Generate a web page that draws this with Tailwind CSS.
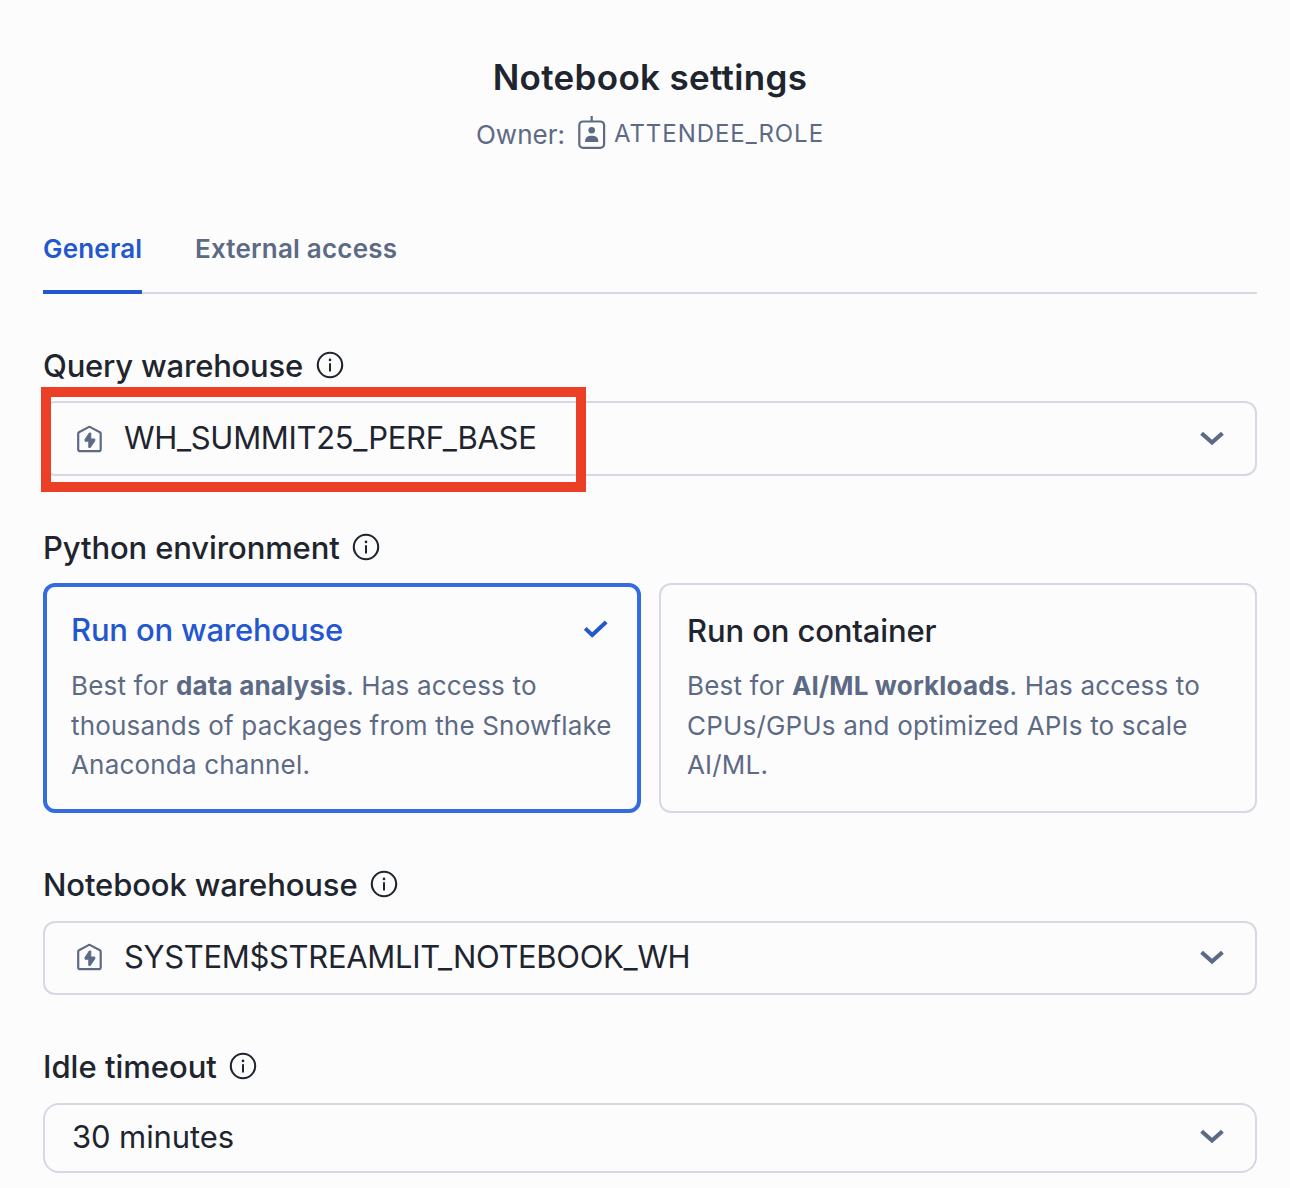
<!DOCTYPE html>
<html lang="en">
<head>
<meta charset="utf-8">
<title>Notebook settings</title>
<script src="https://cdn.jsdelivr.net/npm/@tailwindcss/browser@4"></script>
</head>
<body class="bg-[#fcfcfc] font-['Inter',sans-serif] text-[#1e252f] w-[1290px] h-[1188px] overflow-hidden">
<svg class="hidden">
  <symbol id="info" viewBox="0 0 28 28" fill="none" stroke="currentColor"><circle cx="14" cy="14" r="12.200" stroke-width="2.100"/><path d="M14 12.200v8.300" stroke-width="2"/><circle cx="14" cy="8.900" r="1.300" fill="currentColor" stroke="none"/></symbol>
  <symbol id="chev" viewBox="0 0 24 15" fill="none" stroke="currentColor"><path d="M1.600 2.200 12 11.500 22.400 2.200" stroke-width="4.200"/></symbol>
  <symbol id="wh" viewBox="0 0 26 28" fill="none" stroke="currentColor"><path d="M1.200 8.800q0-1 .8-1.500L11.600 2.100q.8-.4 1.600 0L22.900 7.300q.8.500.8 1.500V24.200a2 2 0 0 1-2 2H3.200a2 2 0 0 1-2-2Z" stroke-width="2.200" stroke-linejoin="round"/><path d="M13.800 8h-1.500L8 14.500v1.700h3.800v6.300h1.500L17.800 15.800v-1.800h-4Z" fill="currentColor" stroke-width="1" stroke-linejoin="round"/></symbol>
</svg>
<main class="pl-[43px] pr-[33px] flex flex-col">
  <header class="flex flex-col items-center pt-[55px]">
    <h1 class="text-[35px] leading-[44px] font-semibold tracking-[0.33px]">Notebook settings</h1>
    <div class="mt-[13px] h-[44px] flex items-center text-[#5d6a85] text-[26px]">
      <span>Owner:</span>
      <svg class="w-7 h-[34px] ml-[13px] mr-2 mb-1" viewBox="0 0 28 34" fill="none" stroke="currentColor"><rect x="1.300" y="6.500" width="24.800" height="26.300" rx="3.800" stroke-width="2.200"/><path d="M13.700 1v6" stroke-width="2.200"/><circle cx="13.700" cy="15.200" r="3.300" fill="currentColor" stroke="none"/><path d="M7.100 27v-1q0-5.300 6.600-5.300t6.600 5.300v1Z" fill="currentColor" stroke="none"/></svg>
      <span class="text-[24px] tracking-[0.95px]">ATTENDEE_ROLE</span>
    </div>
  </header>
  <nav class="mt-[66px] h-[72px] border-b-2 border-[#d5d9e4] flex gap-[53px] text-[26px] font-semibold tracking-[0.2px]">
    <span class="w-[99px] h-[72px] border-b-4 border-[#2257d0] text-[#2257d0] leading-[54px]">General</span>
    <span class="text-[#5d6a85] leading-[54px]">External access</span>
  </nav>

  <section class="mt-[52px]">
    <h2 class="h-10 flex items-center gap-[12.500px] text-[31px] font-medium tracking-[-0.2px]">Query warehouse<svg class="size-7 mb-[2px]"><use href="#info"/></svg></h2>
    <div class="relative mt-[15px] h-[75px] border-2 border-[#d5d9e4] rounded-xl flex items-center pl-8 pr-[31px] text-[31px] tracking-[-0.31px]">
      <svg class="w-[26px] h-7 text-[#5d6a85]"><use href="#wh"/></svg>
      <span class="ml-[21px]">WH_SUMMIT25_PERF_BASE</span>
      <svg class="w-6 h-[15px] ml-auto text-[#5d6a85]"><use href="#chev"/></svg>
      <div class="absolute -left-1 -top-4 w-[545px] h-[105px] border-[10px] border-[#eb4026]"></div>
    </div>
  </section>

  <section class="mt-[52px]">
    <h2 class="h-10 flex items-center gap-[12.500px] text-[31px] font-medium tracking-[-0.12px]">Python environment<svg class="size-7 mb-[2px]"><use href="#info"/></svg></h2>
    <div class="mt-[15px] grid grid-cols-2 gap-[18px]">
      <div class="h-[230px] border-4 border-[#356be0] rounded-xl pl-6 pr-[29px] pt-[23px]">
        <div class="h-10 flex items-center justify-between text-[31px] font-medium tracking-[-0.19px] text-[#2257d0]">Run on warehouse<svg class="w-6 h-[18px] mb-[2px]" viewBox="0 0 24 18" fill="none" stroke="currentColor" stroke-width="4"><path d="M1.200 8.500 8.200 15 22.200 2"/></svg></div>
        <p class="mt-[16.300px] text-[26px] leading-[39.500px] tracking-[0.18px] text-[#5d6a85] whitespace-nowrap">Best for <b>data analysis</b>. Has access to<br>thousands of packages from the Snowflake<br>Anaconda channel.</p>
      </div>
      <div class="h-[230px] border-2 border-[#d5d9e4] rounded-xl pl-[26px] pt-[26px]">
        <div class="h-10 flex items-center text-[31px] font-medium tracking-[-0.13px]">Run on container</div>
        <p class="mt-[15.300px] text-[26px] leading-[39.500px] tracking-[0.18px] text-[#5d6a85] whitespace-nowrap">Best for <b>AI/ML workloads</b>. Has access to<br>CPUs/GPUs and optimized APIs to scale<br>AI/ML.</p>
      </div>
    </div>
  </section>

  <section class="mt-[52px]">
    <h2 class="h-10 flex items-center gap-3 text-[31px] font-medium tracking-[-0.12px]">Notebook warehouse<svg class="size-7 mb-[2px]"><use href="#info"/></svg></h2>
    <div class="mt-4 h-[74px] border-2 border-[#d5d9e4] rounded-xl flex items-center pl-8 pr-[31px] pb-[2px] text-[31px] tracking-[-0.33px]">
      <svg class="w-[26px] h-7 text-[#5d6a85]"><use href="#wh"/></svg>
      <span class="ml-[21px]">SYSTEM$STREAMLIT_NOTEBOOK_WH</span>
      <svg class="w-6 h-[15px] ml-auto text-[#5d6a85]"><use href="#chev"/></svg>
    </div>
  </section>

  <section class="mt-[52px]">
    <h2 class="h-10 flex items-center gap-[12.500px] text-[31px] font-medium">Idle timeout<svg class="size-7 mb-[2px]"><use href="#info"/></svg></h2>
    <div class="mt-4 h-[70px] border-2 border-[#d5d9e4] rounded-2xl flex items-center pl-[27px] pr-[31px] pb-[2px] text-[31px] tracking-[-0.1px]">
      <span>30 minutes</span>
      <svg class="w-6 h-[15px] ml-auto mb-[2px] text-[#5d6a85]"><use href="#chev"/></svg>
    </div>
  </section>
</main>
</body>
</html>
